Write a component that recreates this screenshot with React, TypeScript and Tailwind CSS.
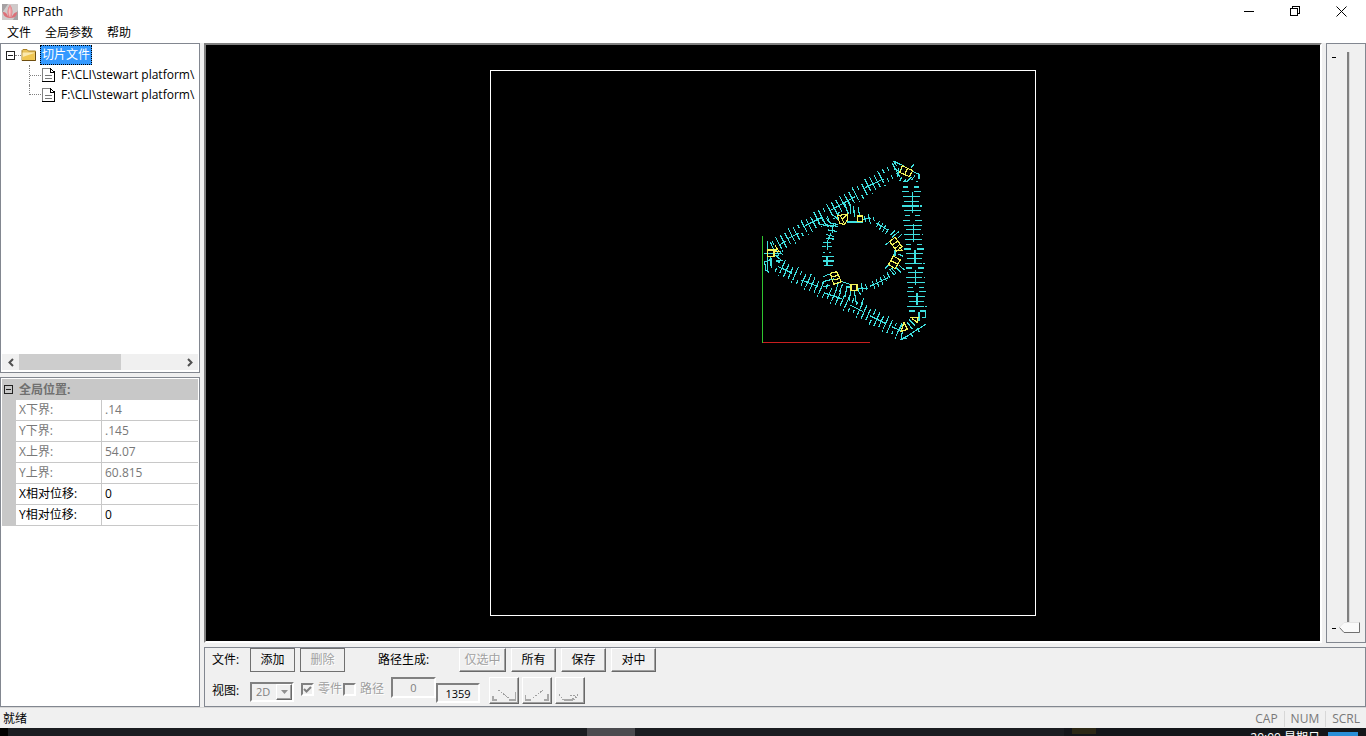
import React from 'react';
import { clsx } from 'clsx';

type Point = [number, number];

const UI_FONT = "font-['Open_Sans','Noto_Sans_CJK_SC',sans-serif]";

const MENU = ['文件', '全局参数', '帮助'];
const SLICE_FILES = [
  { id: 1, path: 'F:\\CLI\\stewart platform\\' },
  { id: 2, path: 'F:\\CLI\\stewart platform\\' },
];

const PROPERTIES = [
  { label: 'X下界:', value: '.14', editable: false },
  { label: 'Y下界:', value: '.145', editable: false },
  { label: 'X上界:', value: '54.07', editable: false },
  { label: 'Y上界:', value: '60.815', editable: false },
  { label: 'X相对位移:', value: '0', editable: true },
  { label: 'Y相对位移:', value: '0', editable: true },
];

/* ---------- toolpath drawing, in units of a third of a pixel ---------- */

const seg = (a: Point, b: Point) => `M${a[0].toFixed(1)} ${a[1].toFixed(1)}L${b[0].toFixed(1)} ${b[1].toFixed(1)}`;

// Hatch lines laid across a straight wall. Broken ones only keep their two ends.
const hatch = (from: Point, to: Point, count: number, dir: Point, half: number, broken: number[]) => {
  let d = '';
  for (let i = 0; i < count; i++) {
    const t = i / (count - 1);
    const x = from[0] + (to[0] - from[0]) * t;
    const y = from[1] + (to[1] - from[1]) * t;
    const at = (k: number): Point => [x + dir[0] * k, y + dir[1] * k];
    const h = half + ((i * 2) % 3) * 3 - 3;
    if (broken.includes(i)) {
      d += seg(at(-h), at(-8)) + seg(at(8), at(h));
    } else if (i % 3 === 1) {
      d += seg(at(-h), at(h - 9)) + seg(at(h - 4), at(h));
    } else {
      d += seg(at(-h), at(h));
    }
  }
  return d;
};

const walls =
  hatch([60, 276], [405, 54], 28, [0.46, 0.89], 22, [0, 6, 12, 20, 26, 27]) +
  hatch([68, 332], [430, 528], 29, [-0.4, 0.92], 22, [0, 5, 11, 17, 18, 22, 27]) +
  hatch([468, 96], [487, 468], 27, [1, 0], 26, [0, 1, 6, 7, 12, 13, 17, 21, 22, 26]);

const spines =
  'M72 271L92 258M100 250L131 235M150 212L200 187M225 167L300 125M330 98L385 72' +
  'M70 335L112 355M140 375L190 395M208 414L262 432M285 450L325 470M345 482L390 505M410 515L440 528' +
  'M472 110V175M476 208V260M480 285V325M482 345V390M486 415V450';

const ring =
  'M275 201H325M325 193L348 190M362 203L400 226M340 177L346 206M328 184L331 200M310 157L313 181M354 186L358 198' +
  'M374 198L364 216M384 204L373 224M392 211L382 232M401 221L391 238M235 205L232 235M228 235L218 257M217 255V285M216 302V332' +
  'M222 211L250 214M220 225L246 229M212 238L238 245M214 251L236 252M204 263H229M202 275H212M218 275H231M204 292H210M222 292H228' +
  'M200 305H236M203 318H236M206 331H214M220 331H233M258 379L288 389M272 396H290M320 384L322 412M308 402L338 400M332 388L336 406' +
  'M345 394L399 368M352 378L360 401M363 372L371 395M375 366L384 388M385 359L395 378M396 352L404 368M404 343L418 360' +
  'M406 240L420 226M410 248L431 230M428 250L440 238M402 262L390 270M420 286V304M420 287L416 303M430 297L445 304M424 338L438 352M432 330L448 345M402 330L390 340M410 340L424 356';

const corners =
  'M415 18L447 33M415 18L424 32M412 25L434 66M418 42L436 50M432 38L428 66M422 58L440 44M440 67L434 78M452 72L448 82M470 66L452 82M468 38L478 26M474 50L492 58V72M480 62L470 74' +
  'M445 80H458M482 80H490M38 258V350M28 318L33 346L42 352M28 322L50 312V338M46 305V332M28 296H80M57 285L46 262M60 300L82 318M66 305L78 290M70 286L84 300M62 318H76' +
  'M438 555L512 508M438 555L443 525M443 545L454 552M455 500L472 522M462 494L480 512M466 535L474 546M486 520L494 532M500 488L512 488V470M442 508L430 532M492 470V498' +
  'M190 206L222 214M200 190L210 206L232 216M212 188L226 204L248 208M252 172L246 192M268 142L280 176M284 140L288 178M296 152L298 186M232 178L250 194' +
  'M200 386L212 378L236 372M204 366L216 360L228 358M206 396L224 390M250 384L238 420M262 388L254 410M276 392L270 426M288 408L282 438M298 408L304 446M308 404L318 420M318 448L326 430';

const yellow =
  'M248 182L276 177L278 193L268 208L254 205ZM256 181L268 206M276 178L260 194M307 183H323V200H307Z' +
  'M442 32L473 47L463 65L434 52ZM458 39L449 59M404 260L420 247L441 275L425 288ZM412 270L429 258M420 281L436 267M420 287H443L432 277' +
  'M415 303L436 315L420 341L401 328ZM408 317L429 328M288 388H306V406H288Z' +
  'M226 355L245 350L259 380L236 388ZM231 366L250 361M237 375L255 370M37 285H57V305H37ZM57 289H72L60 272M57 288L68 280' +
  'M466 488H492M470 490L488 503V488M447 503L457 523L438 530L447 503';

const Viewport: React.FC = () => (
  <div className="flex-1 min-w-0 overflow-hidden bg-black border-2 border-t-[#808080] border-l-[#808080] border-r-white border-b-white">
    <svg className="w-full h-full" viewBox="206 45 1114 596" fill="none" shapeRendering="crispEdges" role="img" aria-label="RPPath">
      <rect x="490.5" y="70.5" width="545" height="545" stroke="#fff" />
      <path d="M762.5 236V343" stroke="#2fc52f" />
      <path d="M763 342.5H870" stroke="#c81e1e" />
      <g transform="translate(755 155) scale(0.33333)" strokeWidth="3.4">
        <path d={walls + spines + ring + corners} stroke="#3fe0e0" />
        <path d={yellow} stroke="#f2f25a" />
      </g>
    </svg>
  </div>
);

/* ---------- small controls ---------- */

const Logo: React.FC = () => (
  <svg width="16" height="16" viewBox="0 0 16 16" aria-hidden="true">
    <rect width="16" height="16" fill="#cfcaca" />
    <path d="M0 0h6L0 9zM16 16V6l-5 10z" fill="#a5a1a3" />
    <path d="M8 1C5 5 5 9 7 14C2 13 1 10 1 8C4 8 5 10 7 14H9C11 10 13 8 15 8C15 11 13 14 9 14C11 9 11 5 8 1Z" fill="#dc6f78" />
    <path d="M8 1C5 5 5 10 8 14C11 10 11 5 8 1Z" fill="#e8959a" />
    <path d="M8 3C6.500 6 6.500 10 8 13C8.500 10 9 6 8 3Z" fill="#f7c0c2" />
  </svg>
);

const FolderIcon: React.FC = () => (
  <svg width="16" height="16" viewBox="0 0 16 16" aria-hidden="true">
    <path d="M1 3.5L2 2.5H6L7.500 4H14.500V13.500H1Z" fill="#e9c25a" stroke="#a98025" />
    <path d="M1.500 5.500H13.500V13H1.500Z" fill="#fbe9ae" />
    <path d="M1.500 10L13.500 6V13H1.500Z" fill="#f0c650" />
    <path d="M1 13.500H14.500V5" fill="none" stroke="#6d4d10" />
  </svg>
);

const PageIcon: React.FC = () => (
  <svg width="14" height="16" viewBox="0 0 14 16" fill="none" aria-hidden="true" shapeRendering="crispEdges">
    <path d="M1.500 1.500H9L13.500 5V14.500H1.500Z" fill="#fff" stroke="#808080" />
    <path d="M9.500 1.500V5.500H13.500M13.500 5V14.500H1" stroke="#000" />
    <path d="M9 1.500L13.500 5" stroke="#000" />
    <path d="M4 8.500H11M4 11.500H11" stroke="#777" />
  </svg>
);

const MinusBox: React.FC = () => (
  <svg width="9" height="9" viewBox="0 0 9 9" fill="none" stroke="#222" shapeRendering="crispEdges" aria-hidden="true">
    <path d="M.5.5H8.500V8.500H.5ZM2 4.500H7" />
  </svg>
);

const RAISED = 'border border-t-white border-l-white border-r-[#696969] border-b-[#696969] shadow-[inset_-1px_-1px_0_#a0a0a0]';
const SUNKEN = 'border-2 border-t-[#808080] border-l-[#808080] border-r-white border-b-white';

const FlatButton: React.FC<{ label: string; disabled?: boolean; outlined?: boolean; wide?: boolean }> = ({
  label,
  disabled,
  outlined,
  wide,
}) => (
  <button
    disabled={disabled}
    className={clsx(
      'h-6 bg-[#f0f0f0]',
      wide ? 'w-[47px]' : 'w-[45px]',
      outlined ? 'border border-[#707070]' : RAISED,
      disabled ? 'text-[#a0a0a0] [text-shadow:1px_1px_0_#fff]' : 'text-black',
    )}
  >
    {label}
  </button>
);

const VIEW_GLYPHS = [
  'M2 11V16H7V14H4V11ZM19 16V14H25V7H26V16Z',
  'M2 10H3V14H8V16H2ZM21 14H24V9H26V16H21Z',
  'M6 14H19V15H17V16H8V15H6Z',
];
const VIEW_DOTS = ['M8 5L19 13', 'M10 13L20 5', 'M3 9L6 13M14 10H19V13M16 14L21 12V9'];

const TitleBar: React.FC = () => (
  <header className="flex items-center h-[23px] px-0.5 bg-white shrink-0">
    <Logo />
    <h1 className="ml-[5px] flex-1">RPPath</h1>
    <button aria-label="最小化" className="w-[46px] h-full flex items-center justify-center">
      <svg width="11" height="11" viewBox="0 0 11 11" stroke="#000" shapeRendering="crispEdges"><path d="M0 5.500H10" /></svg>
    </button>
    <button aria-label="还原" className="w-[46px] h-full flex items-center justify-center">
      <svg width="11" height="11" viewBox="0 0 11 11" fill="none" stroke="#000" shapeRendering="crispEdges">
        <path d="M.5 2.500H7.500V9.500H.5ZM2.500 2V.5H9.500V7.500H8" />
      </svg>
    </button>
    <button aria-label="关闭" className="w-[46px] h-full flex items-center justify-center">
      <svg width="11" height="11" viewBox="0 0 11 11" stroke="#000"><path d="M.5.5L10.500 10.500M10.500.5L.5 10.500" /></svg>
    </button>
  </header>
);

const FileTree: React.FC = () => (
  <section className="flex-1 min-h-0 flex flex-col bg-white border border-[#828790] p-px">
    <div className="flex-1 min-h-0 overflow-hidden">
      <div className="flex items-center h-5 pl-1">
        <MinusBox />
        <span className="w-1.5 border-t border-dotted border-[#808080]" />
        <FolderIcon />
        <span className="ml-[3px] h-5 px-px leading-5 bg-[#3399ff] text-white border border-dotted border-black flex items-center">
          切片文件
        </span>
      </div>
      <ul>
        {SLICE_FILES.map(({ id, path }, idx) => {
          const last = idx === SLICE_FILES.length - 1;
          return (
            <li key={id} className="flex items-center h-5 pl-[27px]">
              <span
                className={clsx(
                  'w-3 self-stretch border-l border-dotted border-[#808080] flex items-center',
                  last && 'mb-2.5',
                )}
              >
                <span className={clsx('w-full border-t border-dotted border-[#808080]', last && 'self-end')} />
              </span>
              <PageIcon />
              <span className="ml-1.5 whitespace-nowrap">{path}</span>
            </li>
          );
        })}
      </ul>
    </div>
    <div className="flex h-4 mb-px bg-[#f0f0f0]">
      <button aria-label="向左滚动" className="w-[17px] flex items-center justify-center">
        <svg width="6" height="9" viewBox="0 0 6 9" fill="none" stroke="#505050" strokeWidth="2"><path d="M5 1L1.500 4.500L5 8" /></svg>
      </button>
      <div className="flex-1">
        <div className="h-full w-[63%] bg-[#cdcdcd]" />
      </div>
      <button aria-label="向右滚动" className="w-[17px] flex items-center justify-center">
        <svg width="6" height="9" viewBox="0 0 6 9" fill="none" stroke="#505050" strokeWidth="2"><path d="M1 1L4.500 4.500L1 8" /></svg>
      </button>
    </div>
  </section>
);

const PropertyGrid: React.FC = () => (
  <section className="flex-1 min-h-0 bg-white border border-[#828790] p-px overflow-hidden">
    <table className="w-full table-fixed border-separate border-spacing-0">
      <colgroup>
        <col className="w-3.5" />
        <col className="w-[86px]" />
        <col />
      </colgroup>
      <thead>
        <tr className="h-[21px] bg-[#c8c8c8] text-[#707070]">
          <th className="p-0 pl-0.5"><MinusBox /></th>
          <th colSpan={2} className="p-0 pl-[3px] text-left font-bold leading-5">全局位置:</th>
        </tr>
      </thead>
      <tbody>
        {PROPERTIES.map(({ label, value, editable }) => (
          <tr key={label} className={clsx('h-[21px]', editable ? 'text-black' : 'text-[#787878]')}>
            <td className="p-0 bg-[#c8c8c8]" />
            <td className="p-0 pl-[3px] leading-5 border-b border-r border-[#c8c8c8]">{label}</td>
            <td className="p-0 pl-[3px] leading-5 border-b border-[#c8c8c8]">
              {editable ? (
                <input aria-label={label} defaultValue={value} className="block w-full h-5 bg-transparent outline-none" />
              ) : (
                value
              )}
            </td>
          </tr>
        ))}
      </tbody>
    </table>
  </section>
);

const LayerSlider: React.FC = () => (
  <div className="relative w-10 border border-[#828790] flex">
    <div className="w-3 flex flex-col justify-between py-[13px] pl-[5px]">
      <span className="w-1 h-px bg-black" />
      <span className="w-1 h-px bg-black" />
    </div>
    <div className="flex-1 flex flex-col py-2">
      <div className="flex-1 w-[3px] ml-2 bg-[#808080] border-r border-[#d8d8d8]" />
      <svg className="shrink-0" width="22" height="12" viewBox="0 0 22 12" aria-hidden="true">
        <path d="M0 5.500L5 .5H20.500V10.500H5Z" fill="#fafafa" />
        <path d="M.5 5.500L5 10.500H20.500V.5" fill="none" stroke="#707070" />
        <path d="M0 5.500L5 .5H20" fill="none" stroke="#e4e4e4" />
      </svg>
    </div>
    <input
      type="range"
      aria-label="层"
      min={0}
      max={1359}
      defaultValue={0}
      className="absolute inset-0 w-full h-full opacity-0 [writing-mode:vertical-lr] [direction:rtl]"
    />
  </div>
);

const ControlPanel: React.FC = () => (
  <section className="h-[60px] shrink-0 border border-[#828790] pl-[7px] text-black">
    <div className="flex items-center h-6">
      <span className="w-[38px]">文件:</span>
      <div className="flex gap-[5px]">
        <FlatButton label="添加" outlined />
        <FlatButton label="删除" outlined disabled />
      </div>
      <span className="ml-[33px] w-[81px]">路径生成:</span>
      <div className="flex gap-[5px]">
        <FlatButton label="仅选中" disabled wide />
        <FlatButton label="所有" />
        <FlatButton label="保存" />
        <FlatButton label="对中" />
      </div>
    </div>
    <div className="flex items-start h-8 pt-[5px]">
      <label htmlFor="view" className="w-[38px] self-center">视图:</label>
      <div className="relative mt-[5px] w-11">
        <select
          id="view"
          disabled
          className={clsx('appearance-none w-full h-5 pl-1 text-[11px] leading-4 text-[#808080] bg-[#f0f0f0] opacity-100', SUNKEN)}
        >
          <option>2D</option>
        </select>
        <span className={clsx('absolute right-0.5 top-0.5 w-4 h-4 flex items-center justify-center bg-[#f0f0f0] pointer-events-none', RAISED)}>
          <svg width="7" height="4" viewBox="0 0 7 4"><path d="M0 0H7L3.500 4Z" fill="#909090" /></svg>
        </span>
      </div>
      <label className="ml-[7px] mt-1 flex items-center w-[42px] whitespace-nowrap text-[#a0a0a0] [text-shadow:1px_1px_0_#fff]">
        <span className="relative flex mr-1">
          <input type="checkbox" defaultChecked disabled className={clsx('appearance-none w-[13px] h-[13px] bg-[#f0f0f0]', SUNKEN)} />
          <svg className="absolute inset-0" width="13" height="13" viewBox="0 0 13 13" fill="none" stroke="#808080" strokeWidth="2">
            <path d="M3 6L5.500 8.500L10 4" />
          </svg>
        </span>
        零件
      </label>
      <label className="mt-1 flex items-center w-12 whitespace-nowrap text-[#a0a0a0] [text-shadow:1px_1px_0_#fff]">
        <input type="checkbox" disabled className={clsx('appearance-none w-[13px] h-[13px] mr-1 bg-[#f0f0f0]', SUNKEN)} />
        路径
      </label>
      <input
        aria-label="起始层"
        disabled
        defaultValue="0"
        className={clsx('w-[45px] h-[21px] text-center text-[11px] text-[#808080] bg-[#f0f0f0]', SUNKEN)}
      />
      <input
        aria-label="结束层"
        defaultValue="1359"
        className={clsx('mt-1.5 w-11 h-5 text-center text-[11px] bg-[#f0f0f0]', SUNKEN)}
      />
      <div className="ml-[9px] flex gap-[3px]">
        {VIEW_GLYPHS.map((glyph, idx) => (
          <button key={glyph} disabled aria-label={`工具 ${idx + 1}`} className={clsx('w-[30px] h-[27px] flex items-end', RAISED)}>
            <svg width="28" height="18" viewBox="0 0 28 18" fill="none" shapeRendering="crispEdges">
              <path d={glyph} fill="#a8a8a8" />
              <path d={VIEW_DOTS[idx]} stroke="#a0a0a0" strokeDasharray="2 1" />
            </svg>
          </button>
        ))}
      </div>
    </div>
  </section>
);

const StatusBar: React.FC = () => (
  <footer className="flex items-center h-[21px] shrink-0 border-t border-[#d7d7d7] pt-px pl-[3px] text-black">
    <span className="flex-1">就绪</span>
    <span className="px-1.5 text-[#787878]">CAP</span>
    <span className="px-1.5 border-l border-[#d7d7d7] text-[#787878]">NUM</span>
    <span className="px-1.5 border-l border-[#d7d7d7] text-[#787878]">SCRL</span>
  </footer>
);

// Strip of the desktop that shows below the window
const DesktopEdge: React.FC = () => (
  <div className="flex h-2 shrink-0 overflow-hidden bg-[#1b1d21] leading-3">
    <div className="w-[43%] border-l-8 border-black" />
    <div className="w-12 bg-[#4b4b4f]" />
    <div className="flex-1 flex justify-end">
      <div className="flex bg-[#14161a]">
        <span className="w-6 h-1.5 ml-2 mr-[154px] bg-[#2c2816]" />
        <span className="mt-1 mr-2 whitespace-nowrap text-white">20:09 星期日</span>
        <span className="mt-1 mr-2 w-[30px] h-1 bg-[#2a8fd8]" />
      </div>
    </div>
  </div>
);

const App: React.FC = () => {
  return (
    <div className={clsx('h-screen flex flex-col overflow-hidden bg-[#f0f0f0] text-xs text-black', UI_FONT)}>
      <TitleBar />
      <nav className="flex h-5 shrink-0 bg-white pl-[7px] gap-3.5">
        {MENU.map((item) => (
          <button key={item} className="leading-5">{item}</button>
        ))}
      </nav>
      <main className="flex-1 min-h-0 flex gap-1">
        <aside className="w-[200px] shrink-0 flex flex-col gap-1">
          <FileTree />
          <PropertyGrid />
        </aside>
        <div className="flex-1 min-w-0 flex flex-col gap-1">
          <div className="flex-1 min-h-0 flex gap-1">
            <Viewport />
            <LayerSlider />
          </div>
          <ControlPanel />
        </div>
      </main>
      <StatusBar />
      <DesktopEdge />
    </div>
  );
};

export default App;
